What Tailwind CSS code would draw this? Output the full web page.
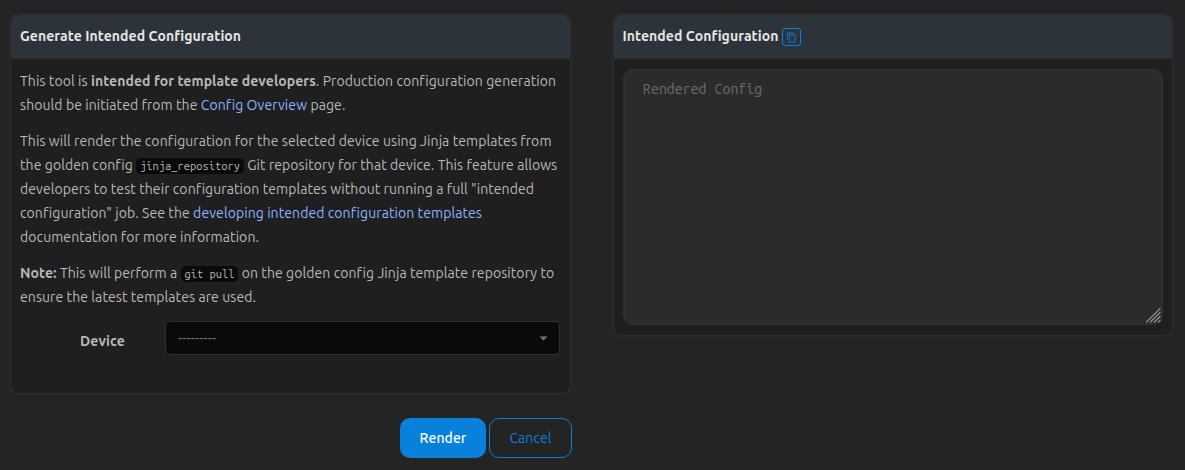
<!DOCTYPE html>
<html lang="en">
<head>
<meta charset="utf-8">
<title>Generate Intended Configuration</title>
<script src="https://cdn.jsdelivr.net/npm/@tailwindcss/browser@4"></script>
</head>
<body class="w-[1185px] h-[470px] overflow-hidden bg-[#242424] font-[Ubuntu,'Noto_Sans',sans-serif] text-[14px] leading-6 tracking-[0.08px] text-[#b8b8b8]">
<main class="flex items-start gap-10 pl-[9px] pt-[13px] whitespace-nowrap">
  <section class="w-[563px] shrink-0">
    <div class="h-[382px] rounded-[10px] border-2 border-[#2a2a2a] bg-[#1f1f1f] overflow-hidden">
      <h1 class="h-[44px] bg-[#2d333a] border-b border-[#2b2b2b] pl-[9px] pt-[9px] font-bold text-[#e8e6e3]">Generate Intended Configuration</h1>
      <div class="pl-[9px] pt-[10px]">
        <p class="h-12 mb-3">This tool is <b>intended for template developers</b>. Production configuration generation<br>
          should be initiated from the <a href="#" class="text-[#8cb4ff]">Config Overview</a> page.</p>
        <p class="h-[120px] mb-3">This will render the configuration for the selected device using Jinja templates from<br>
          the golden config <code class="inline-block h-4 px-1 rounded-[5px] bg-[#0a0a0a] font-['Ubuntu_Mono','DejaVu_Sans_Mono',monospace] text-[11.15px] leading-4 tracking-normal">jinja_repository</code> Git repository for that device. This feature allows<br>
          developers to test their configuration templates without running a full "intended<br>
          configuration" job. See the <a href="#" class="text-[#8cb4ff]">developing intended configuration templates</a><br>
          documentation for more information.</p>
        <p class="h-12"><b>Note:</b> This will perform a <code class="inline-block h-4 px-1 rounded-[5px] bg-[#0a0a0a] font-['Ubuntu_Mono','DejaVu_Sans_Mono',monospace] text-[11.15px] leading-4 tracking-normal">git pull</code> on the golden config Jinja template repository to<br>
          ensure the latest templates are used.</p>
        <div class="flex mt-3">
          <label class="w-[145px] pl-[60px] pt-2 font-bold">Device</label>
          <div class="flex items-center justify-between w-[395px] h-[34px] rounded-[4px] border border-[#303030] bg-[#0a0a0a] pl-3 pr-[11px] text-[#777]">
            <span class="tracking-[0.2px]">---------</span>
            <svg width="9" height="5" viewBox="0 0 9 5" fill="#777"><path d="M0.5 0.5H8.5L4.5 4.5Z"/></svg>
          </div>
        </div>
      </div>
    </div>
    <div class="flex justify-end gap-[3px] mt-[23px]">
      <button class="w-[86px] h-10 rounded-[10px] bg-[#0880dc] text-white font-medium">Render</button>
      <button class="w-[83px] h-10 rounded-[10px] border border-[#0880dc] text-[#0880dc]">Cancel</button>
    </div>
  </section>
  <section class="w-[562px] h-[324px] shrink-0 rounded-[10px] border-2 border-[#2a2a2a] bg-[#1f1f1f] overflow-hidden">
    <h1 class="flex h-[44px] bg-[#2d333a] border-b border-[#2b2b2b] pl-[8.5px] pt-[9px] font-bold text-[#e8e6e3]">
      <span class="w-[159.5px]">Intended Configuration</span>
      <button class="flex items-center justify-center w-[19px] h-[18px] mt-1 rounded-[3px] border border-[#0880dc]">
        <svg width="11" height="11" viewBox="0 0 24 24" fill="#0880dc"><path d="M19 21H8V7h11m0-2H8a2 2 0 0 0-2 2v14a2 2 0 0 0 2 2h11a2 2 0 0 0 2-2V7a2 2 0 0 0-2-2m-3-4H4a2 2 0 0 0-2 2v14h2V3h12z"/></svg>
      </button>
    </h1>
    <div class="flex flex-col justify-between w-[540px] h-[256px] ml-[9px] mt-[10px] rounded-[10px] border-2 border-[#303030] bg-[#2b2b2b] pl-[18px] pt-[6px] font-['Ubuntu_Mono','DejaVu_Sans_Mono',monospace] text-[14.2px] leading-6 tracking-normal text-[#6c6c6c]">
      <span>Rendered Config</span>
      <svg class="self-end" width="15" height="15" viewBox="0 0 15 15" stroke="#999" stroke-width="1.1"><path d="M0 14.5L14.5 0M4 14.5L14.5 4M8 14.5L14.5 8M12 14.5L14.5 12"/></svg>
    </div>
  </section>
</main>
</body>
</html>
